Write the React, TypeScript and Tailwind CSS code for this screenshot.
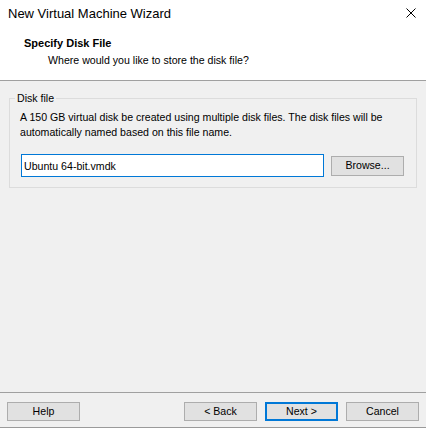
import React from "react";

function WizardButton({
  label,
  primary = false,
}: {
  label: string;
  primary?: boolean;
}) {
  return (
    <button
      type="button"
      className={
        "h-[19px] w-[73px] bg-[#e1e1e1] text-[10.6px] leading-none text-black " +
        (primary ? "border-2 border-[#0078d7]" : "border border-[#adadad]")
      }
    >
      {label}
    </button>
  );
}

export default function App() {
  return (
    <div className="flex h-[428px] w-[426px] flex-col border-b border-[#9a9a9a] bg-[#f0f0f0] font-['Liberation_Sans',Arial,sans-serif] text-black">
      {/* Header with window title and page caption */}
      <div className="h-[81px] shrink-0 border-b border-[#a0a0a0] bg-white">
        <div className="flex h-[28px] items-center justify-between pl-[8px] pr-[10px]">
          <span className="text-[13px] leading-[28px]">New Virtual Machine Wizard</span>
          <svg width="10" height="10" viewBox="0 0 10 10" className="mt-[-2px]">
            <path d="M0.5 0.5 L9.5 9.5 M9.5 0.5 L0.5 9.5" stroke="#000" strokeWidth="1" fill="none" />
          </svg>
        </div>
        <div className="pt-[8px]">
          <div className="pl-[24px] text-[11px] font-bold leading-[14px]">Specify Disk File</div>
          <div className="mt-[3px] pl-[48px] text-[10.6px] leading-[14px]">
            Where would you like to store the disk file?
          </div>
        </div>
      </div>

      {/* Page body */}
      <div className="flex-1 px-[9px] pt-[10px]">
        <fieldset className="h-[97px] border border-[#dcdcdc] pb-[11px] pl-[10px] pr-[12px]">
          <legend className="-ml-[5px] px-[2px] text-[10.6px] leading-[14px]">Disk file</legend>
          <p className="mt-[5px] text-[10.6px] leading-[15px]">
            A 150 GB virtual disk be created using multiple disk files. The disk files will be
            <br />
            automatically named based on this file name.
          </p>
          <div className="mt-[14px] flex items-center">
            <input
              readOnly
              value="Ubuntu 64-bit.vmdk"
              className="ml-[1px] h-[23px] w-[303px] border border-[#0078d7] bg-white pl-[2px] text-[10.6px] text-black outline-none"
            />
            <button
              type="button"
              className="ml-[7px] h-[20px] w-[73px] border border-[#adadad] bg-[#e1e1e1] text-[10.6px] leading-none"
            >
              Browse...
            </button>
          </div>
        </fieldset>
      </div>

      {/* Footer buttons */}
      <div className="flex h-[35px] shrink-0 items-start border-t border-[#a0a0a0] px-[7px] pt-[9px]">
        <WizardButton label="Help" />
        <div className="flex-1" />
        <div className="flex gap-[8px]">
          <WizardButton label="< Back" />
          <WizardButton label="Next >" primary />
          <WizardButton label="Cancel" />
        </div>
      </div>
    </div>
  );
}
